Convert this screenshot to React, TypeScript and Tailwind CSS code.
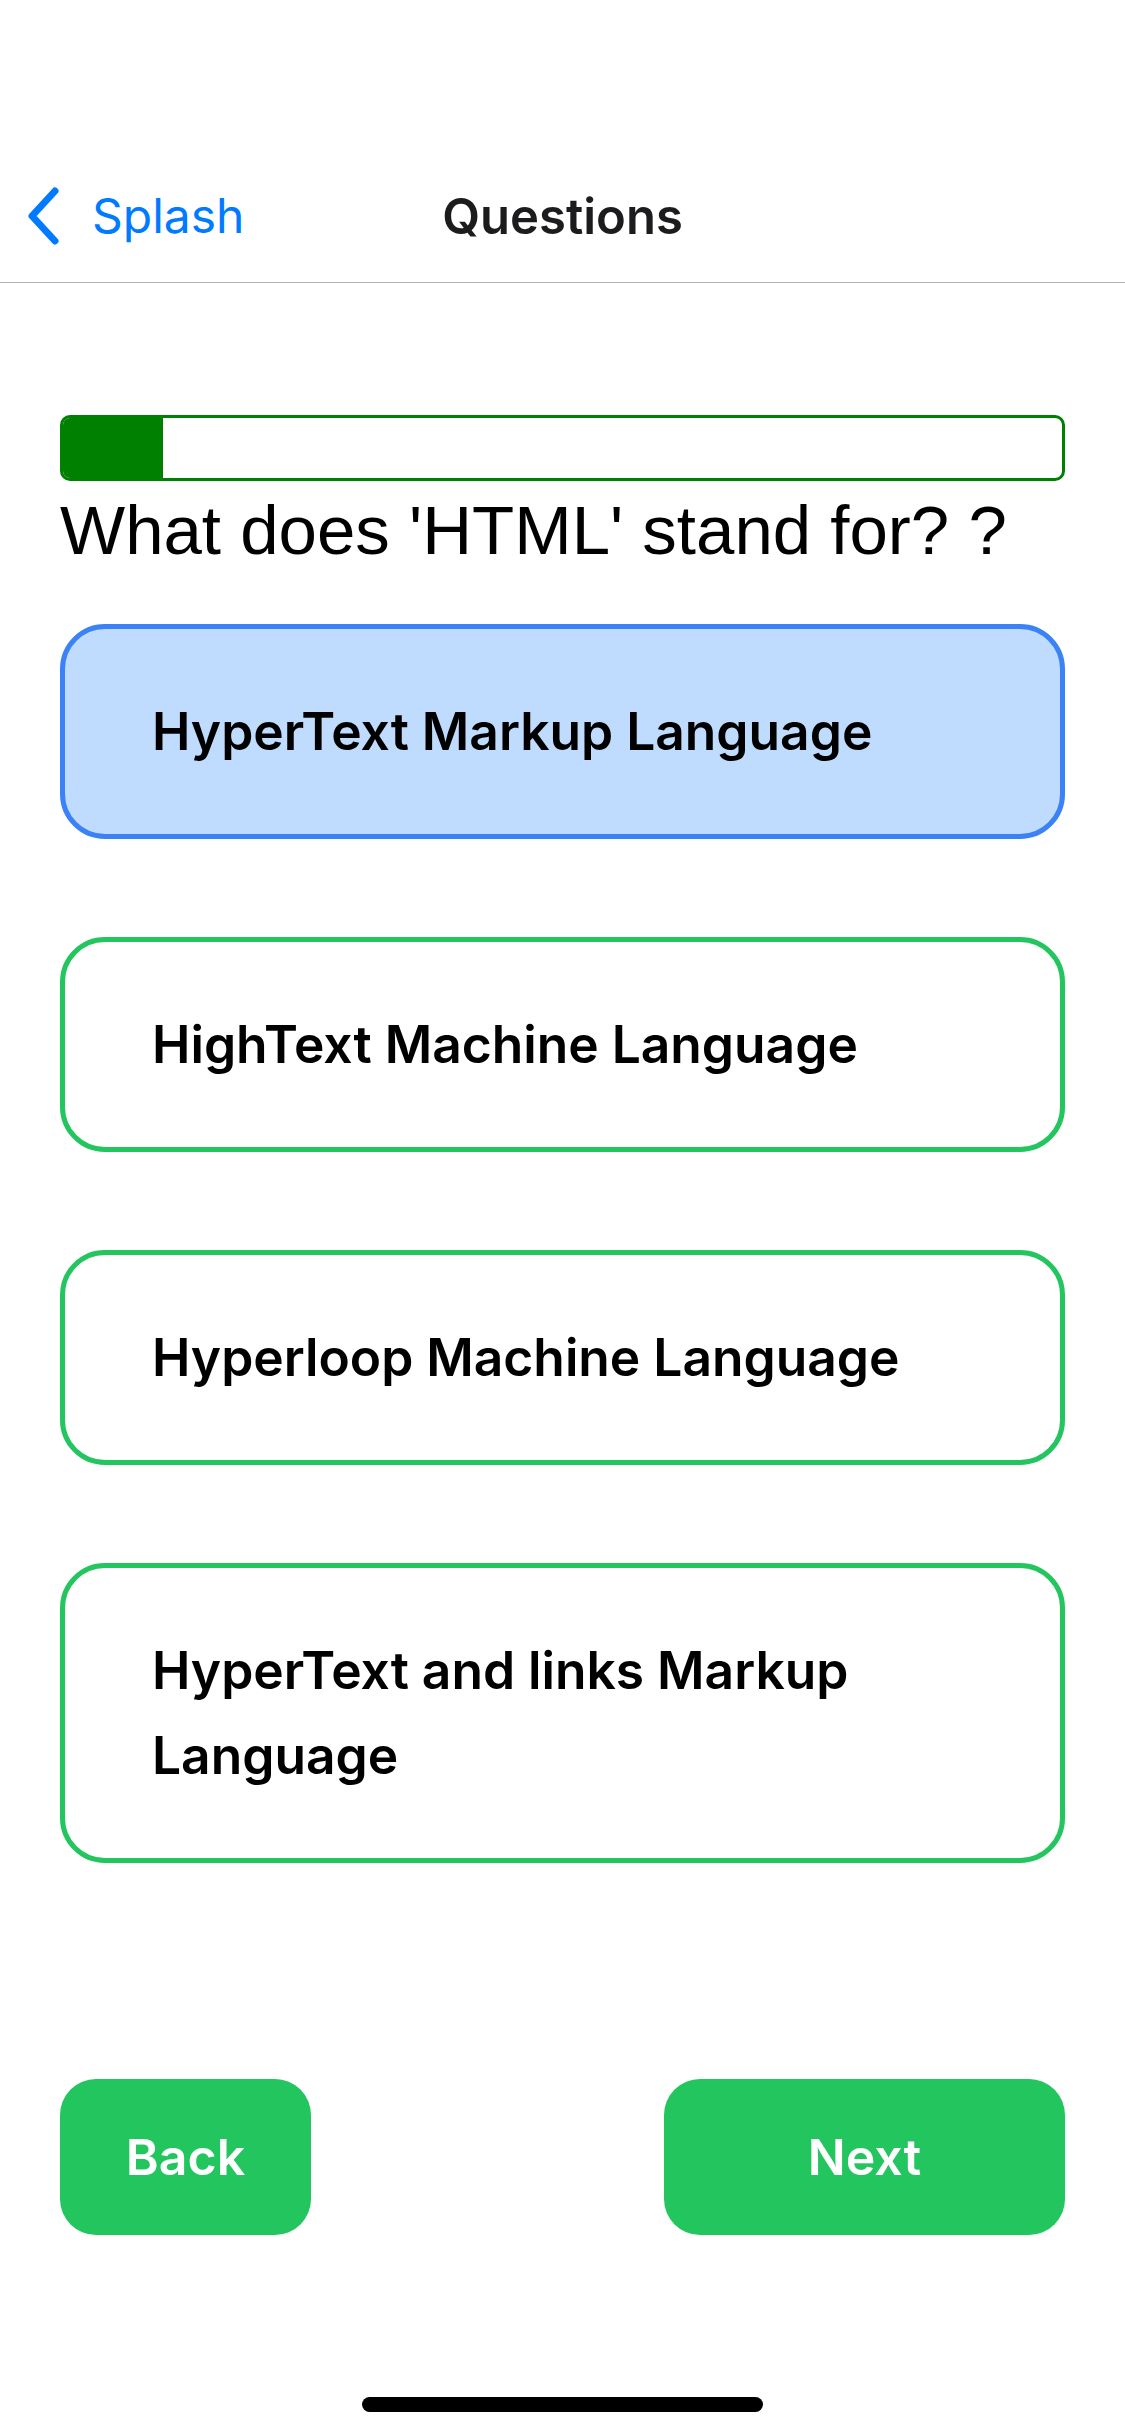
import React from 'react'

interface Option {
  id: string
  label: string
}

const OPTIONS: Option[] = [
  { id: 'a', label: 'HyperText Markup Language' },
  { id: 'b', label: 'HighText Machine Language' },
  { id: 'c', label: 'Hyperloop Machine Language' },
  { id: 'd', label: 'HyperText and links Markup Language' },
]

const sf = { fontFamily: 'Inter, "Noto Sans", sans-serif' }

const App: React.FC = () => {
  const [selected, setSelected] = React.useState('a')
  const progress = 10

  return (
    <div className="min-h-[2436px] w-[1125px] bg-white flex flex-col" style={sf}>
      {/* status bar space */}
      <div className="h-[150px]" />

      {/* Nav bar */}
      <div className="h-[133px] grid grid-cols-[1fr_auto_1fr] items-center border-b border-[#b3b3b3]">
        <button className="flex items-center gap-[30px] pl-[26px] text-[#007aff]">
          <svg width="36" height="58" viewBox="0 0 36 58" fill="none">
            <path d="M29 4 L6 29 L29 54" stroke="#007aff" strokeWidth="7" strokeLinecap="round" strokeLinejoin="round" />
          </svg>
          <span className="text-[48px] leading-none">Splash</span>
        </button>
        <div className="text-[49px] font-semibold text-[#1c1c1e] leading-none">Questions</div>
        <div />
      </div>

      <div className="px-[60px] pt-[132px] flex flex-col">
        {/* Progress */}
        <div className="h-[66px] rounded-[10px] border-[3px] border-[#008000] overflow-hidden">
          <div className="h-full bg-[#008000]" style={{ width: `${progress}%` }} />
        </div>

        <h1
          className="mt-[10px] text-[69px] leading-[80px] text-black font-normal"
          style={{ fontFamily: '"Liberation Sans", Arial, sans-serif' }}
        >
          What does 'HTML' stand for? ?
        </h1>

        <div className="mt-[53px] flex flex-col gap-[98px]">
          {OPTIONS.map(o => (
            <button
              key={o.id}
              onClick={() => setSelected(o.id)}
              className={`text-left rounded-[45px] border-[5px] py-[60px] px-[87px] ${selected === o.id ? 'bg-[#bfdbfe] border-[#3b82f6]' : 'bg-white border-[#22c55e]'}`}
            >
              <span className="block text-[51.5px] leading-[85px] font-semibold text-black">{o.label}</span>
            </button>
          ))}
        </div>

        {/* Footer buttons */}
        <div className="mt-[216px] flex items-center justify-between">
          <button className="w-[251px] h-[156px] rounded-[36px] bg-[#22c55e] text-white text-[50px] font-semibold">Back</button>
          <button className="w-[401px] h-[156px] rounded-[36px] bg-[#22c55e] text-white text-[50px] font-semibold">Next</button>
        </div>
      </div>

      <div className="flex-1" />
      <div className="flex justify-center pb-[24px]">
        <div className="w-[401px] h-[15px] rounded-full bg-black" />
      </div>
    </div>
  )
}

export default App
